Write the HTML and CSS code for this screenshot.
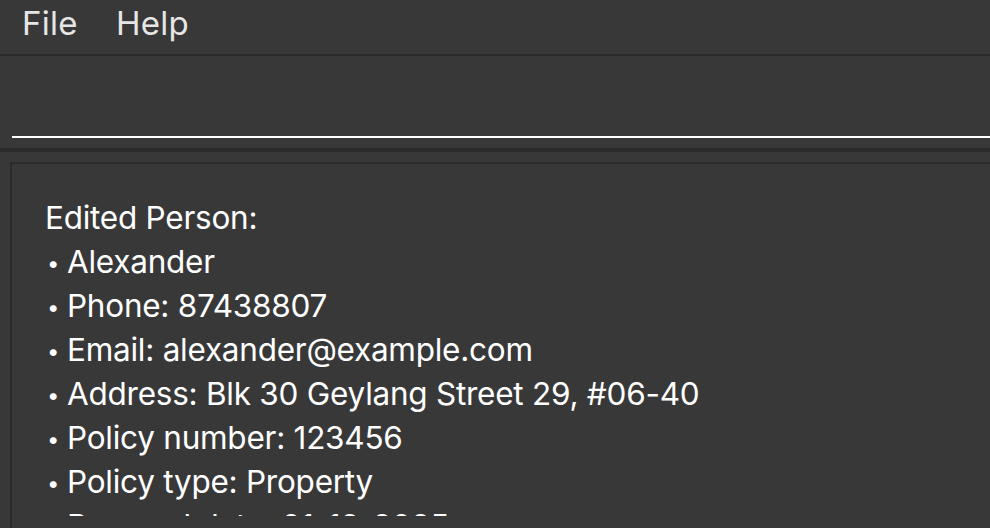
FILE: index.html
```html
<!DOCTYPE html>
<html>
<head>
<meta charset="utf-8">
<link rel="stylesheet" href="styles.css">
</head>
<body>
<div class="menubar">
  <span class="menu-item">File</span>
  <span class="menu-item">Help</span>
</div>
<div class="command">
  <div class="command-input"></div>
</div>
<div class="divider"></div>
<div class="result-wrap">
  <div class="result">
    <div class="scroll">
      <div class="line">Edited Person:</div>
      <div class="line"><span class="dot">•</span>Alexander</div>
      <div class="line"><span class="dot">•</span>Phone: 87438807</div>
      <div class="line"><span class="dot">•</span>Email: alexander@example.com</div>
      <div class="line"><span class="dot">•</span>Address: Blk 30 Geylang Street 29, #06-40</div>
      <div class="line"><span class="dot">•</span>Policy number: 123456</div>
      <div class="line"><span class="dot">•</span>Policy type: Property</div>
      <div class="line"><span class="dot">•</span>Renewal date: 01-12-2025</div>
    </div>
  </div>
</div>
</body>
</html>
```
FILE: styles.css
```css
html, body {
  margin: 0;
  padding: 0;
  background: #383838;
  overflow: hidden;
  height: 528px;
}
body {
  font-family: Inter, "Liberation Sans", sans-serif;
  color: #ffffff;
}
.menubar {
  height: 54px;
  border-bottom: 2px solid #2b2b2b;
  display: flex;
  align-items: center;
  padding-left: 22px;
  gap: 38px;
  box-sizing: content-box;
}
.menu-item {
  font-size: 33px;
  color: #e6e6e6;
  line-height: 44px;
  margin-top: -9px;
  letter-spacing: 0.3px;
}
.command {
  height: 92px;
  padding-left: 12px;
  box-sizing: border-box;
  padding-top: 80px;
}
.command-input {
  height: 0;
  border-bottom: 2px solid #ffffff;
}
.divider {
  height: 4px;
  background: #2b2b2b;
}
.result-wrap {
  padding-top: 10px;
  padding-left: 10px;
}
.result {
  border-top: 2px solid #2b2b2b;
  border-left: 2px solid #2b2b2b;
  height: 364px;
}
.scroll {
  height: 352px;
  box-sizing: border-box;
  overflow: hidden;
  padding: 32px 0 0 33px;
}
.line {
  font-size: 31.5px;
  line-height: 44px;
  height: 44px;
  white-space: nowrap;
  letter-spacing: -0.25px;
}
.dot {
  display: inline-block;
  font-size: 22px;
  width: 22px;
  padding-left: 2px;
  box-sizing: border-box;
  vertical-align: 2px;
  line-height: 0;
}
```
